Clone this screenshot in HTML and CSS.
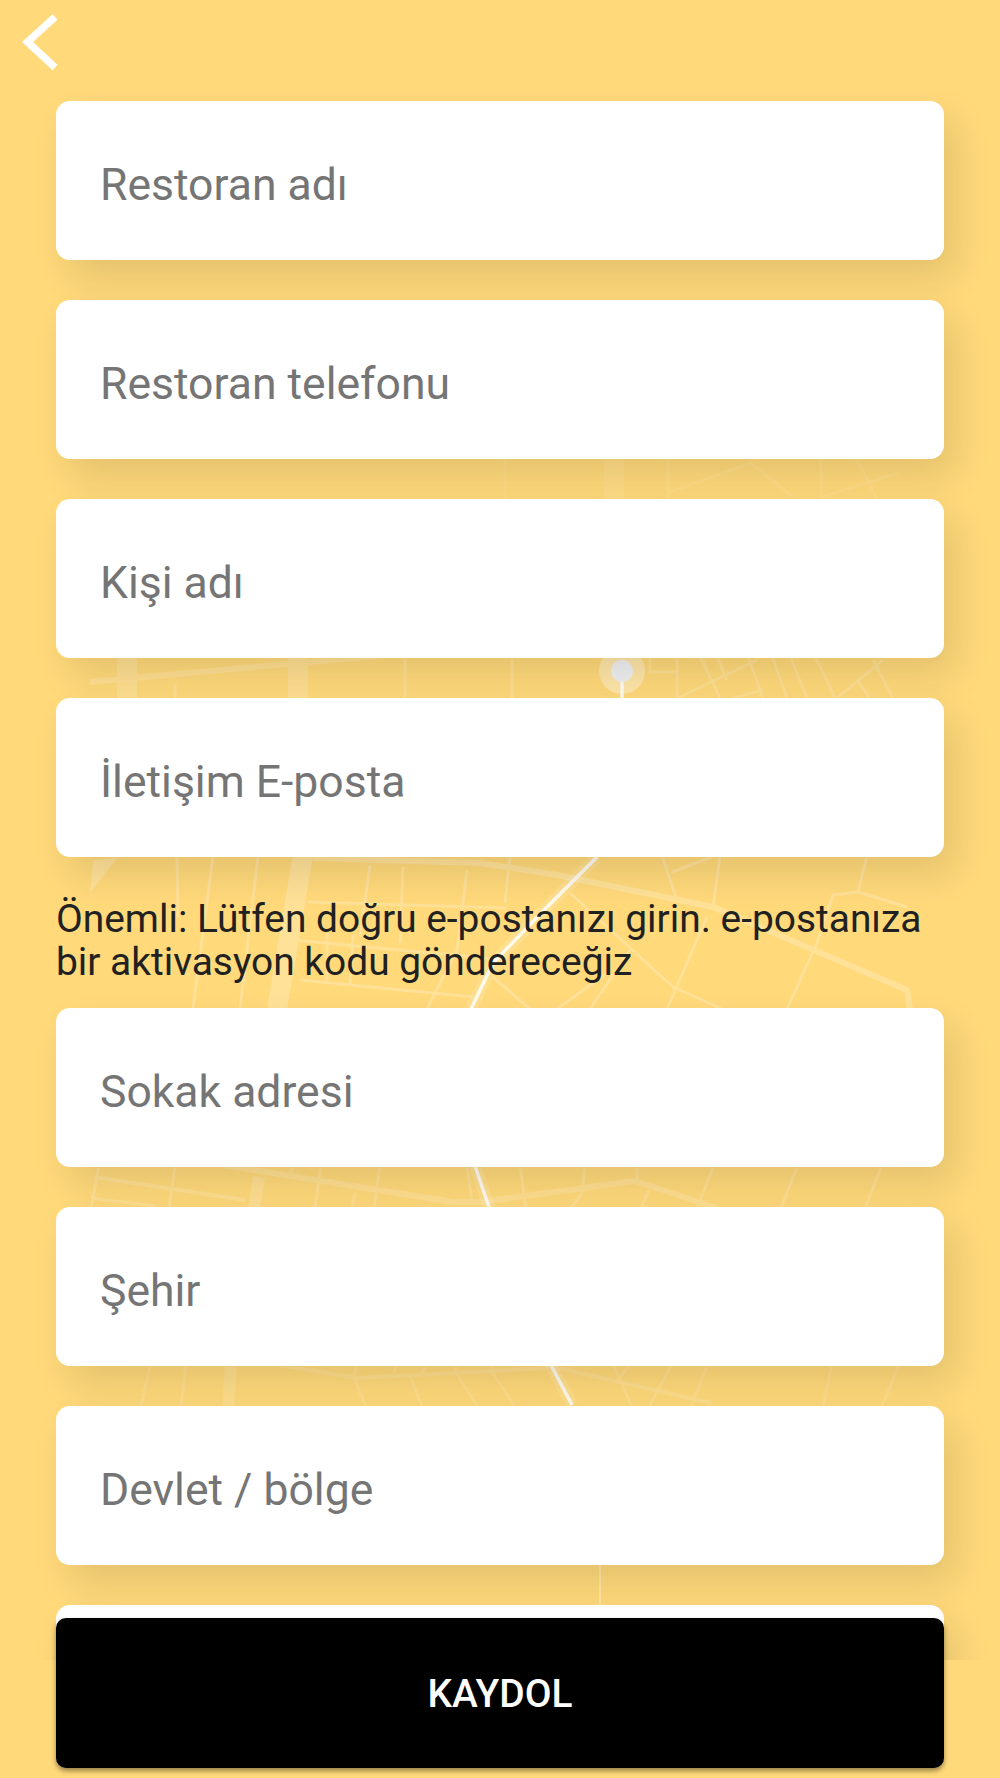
FILE: index.html
```html
<!DOCTYPE html>
<html lang="tr">
<head>
<meta charset="utf-8">
<title>Kaydol</title>
<link rel="stylesheet" href="styles.css">
</head>
<body>
<div class="page">
  <svg class="map" width="1000" height="1778" viewBox="0 0 1000 1778" aria-hidden="true">
    <g class="faint">
      <path class="wide" d="M614 455V500"/>
      <path class="thin" d="M505 455V500M668 455V500M670 492L751 463L793 497M821 458V497M856 458L877 499M821 497L898 473"/>
    </g>
    <g class="mid">
      <path class="wide" d="M127 655V700M298 655V700"/>
      <path class="road" d="M90 682L377 656"/>
      <path class="thin" d="M175 683V700M405 655V700M512 655V700M650 655V672H677M677 655V698M678 698L757 660M700 656L720 698M717 656L727 680M748 656L763 698M772 656L787 698M790 656L807 698M815 656L835 698M837 698L883 660M857 680L870 698M873 660L893 698M733 698L763 690"/>
    </g>
    <g class="strong">
      <path class="block" d="M93 860L117 858L90 893Z"/>
      <path class="wide" d="M303 855L277 1009"/>
      <path class="road" d="M313 858L480 863L557 875L713 907L907 990L910 1009"/>
      <path class="thin" d="M177 856L178 917M213 856L193 1009M258 856L240 1009M370 865L360 937M403 867L400 943M467 870L457 950L427 1009M308 902L507 908M293 940L507 960M300 980L473 997M327 933V983M353 935L350 985M510 856L505 903M662 856L677 900M672 872L712 857M720 856L713 907M867 856L858 892L833 895L817 943L787 1009M858 892L907 907M570 893L673 987L722 1009M707 917L667 1009M630 950L590 1009M493 977L530 1009M607 973L557 1009"/>
    </g>
    <g class="mid">
      <path class="wide-sm" d="M259 1177L254 1208"/>
      <path class="road" d="M223 1165L453 1202L481 1202L635 1181L717 1208"/>
      <path class="road-sm" d="M94 1177L245 1200"/>
      <path class="thin" d="M99 1165L91 1208M175 1165L169 1208M91 1198L155 1206M321 1165L315 1208M380 1165L374 1208M293 1165L290 1177M355 1193L352 1208M467 1165L472 1202M520 1165L526 1208M585 1165L582 1193L571 1208M637 1165V1181M649 1190L641 1208M714 1165L697 1208M798 1165L781 1208M882 1165L865 1208"/>
    </g>
    <g class="soft">
      <path class="wide-sm" d="M231 1364L228 1407"/>
      <path class="road-sm" d="M273 1364L357 1378L548 1368M554 1367L711 1403"/>
      <path class="thin" d="M150 1364L141 1407M186 1364L181 1407M357 1364L354 1378L366 1407M396 1364L394 1373M425 1364L422 1375M456 1364V1373L478 1407M411 1378L422 1407M492 1364V1372L515 1407M613 1364L632 1407M630 1364L616 1383M672 1364L649 1407M708 1364L691 1407M832 1364L823 1407M899 1364L882 1407"/>
    </g>
    <path class="route-halo" d="M597 857L547 907L493 963L472 1007L475 1166L489 1207L551 1365L572 1405"/>
    <path class="route" d="M622 680V698M597 857L547 907L493 963L472 1007L475 1166L489 1207L551 1365L572 1405"/>
    <path class="route-faint" d="M600 1563V1605"/>
    <circle class="pin-halo" cx="622" cy="671" r="23"/>
    <circle class="pin" cx="622" cy="671" r="11"/>
  </svg>

  <div class="scroll">
    <div class="top-bar">
      <svg class="back" width="64" height="84" viewBox="0 0 64 84" aria-label="Geri">
        <path d="M55 17L27.5 42L55 67.5"/>
      </svg>
    </div>
    <div class="form">
      <div class="field">Restoran adı</div>
      <div class="field">Restoran telefonu</div>
      <div class="field">Kişi adı</div>
      <div class="field">İletişim E-posta</div>
      <p class="note">Önemli: Lütfen doğru e-postanızı girin. e-postanıza bir aktivasyon kodu göndereceğiz</p>
      <div class="field">Sokak adresi</div>
      <div class="field">Şehir</div>
      <div class="field">Devlet / bölge</div>
      <div class="field"></div>
    </div>
  </div>

  <button class="submit" type="button">KAYDOL</button>
</div>
</body>
</html>
```

FILE: styles.css
```css
* { box-sizing: border-box; }

html, body {
  margin: 0;
  padding: 0;
}

body {
  font-family: Roboto, "Noto Sans", sans-serif;
  background: #ffd97a;
}

.page {
  position: relative;
  width: 1000px;
  height: 1778px;
  overflow: hidden;
  background: #ffd97a;
}

.map {
  position: absolute;
  left: 0;
  top: 0;
  fill: none;
  stroke: #fff;
  stroke-linecap: butt;
  stroke-linejoin: round;
  filter: blur(0.6px);
}

.faint { opacity: 0.08; }
.soft { opacity: 0.13; }
.mid { opacity: 0.17; }
.strong { opacity: 0.22; }

.wide { stroke-width: 20px; }
.wide-sm { stroke-width: 12px; }
.road { stroke-width: 6px; }
.road-sm { stroke-width: 4px; }
.thin { stroke-width: 3px; }
.block { fill: #fff; stroke: none; }

.route { stroke-width: 3.5px; stroke-opacity: 0.85; }
.route-halo { stroke-width: 12px; stroke-opacity: 0.14; }
.route-faint { stroke-width: 2px; stroke-opacity: 0.3; }

.pin-halo { fill: #fff; fill-opacity: 0.35; stroke: none; }
.pin { fill: #f0f0f0; stroke: none; }

.scroll {
  position: relative;
  height: 1660px;
  overflow: hidden;
}

.top-bar {
  height: 101px;
}

.back {
  display: block;
  fill: none;
  stroke: #fff;
  stroke-width: 7.5px;
  stroke-linejoin: miter;
}

.form {
  padding: 0 56px;
}

.field {
  height: 158.5px;
  margin-bottom: 40.5px;
  padding: 10px 44px 0;
  display: flex;
  align-items: center;
  background: #fff;
  border-radius: 14px;
  box-shadow: 12px 18px 38px rgba(0, 0, 0, 0.11);
  color: #757575;
  font-size: 44.5px;
  line-height: 50px;
}

.note {
  margin: 0 0 25px;
  color: #212121;
  font-size: 38.9px;
  line-height: 43px;
}

.submit {
  position: absolute;
  left: 56px;
  top: 1618px;
  width: 888px;
  height: 150px;
  border: 0;
  border-radius: 10px;
  background: #000;
  box-shadow: 0 3px 5px rgba(0, 0, 0, 0.4);
  color: #fff;
  font-family: Roboto, "Noto Sans", sans-serif;
  font-size: 38.9px;
  font-weight: 500;
  padding: 0;
}
```
